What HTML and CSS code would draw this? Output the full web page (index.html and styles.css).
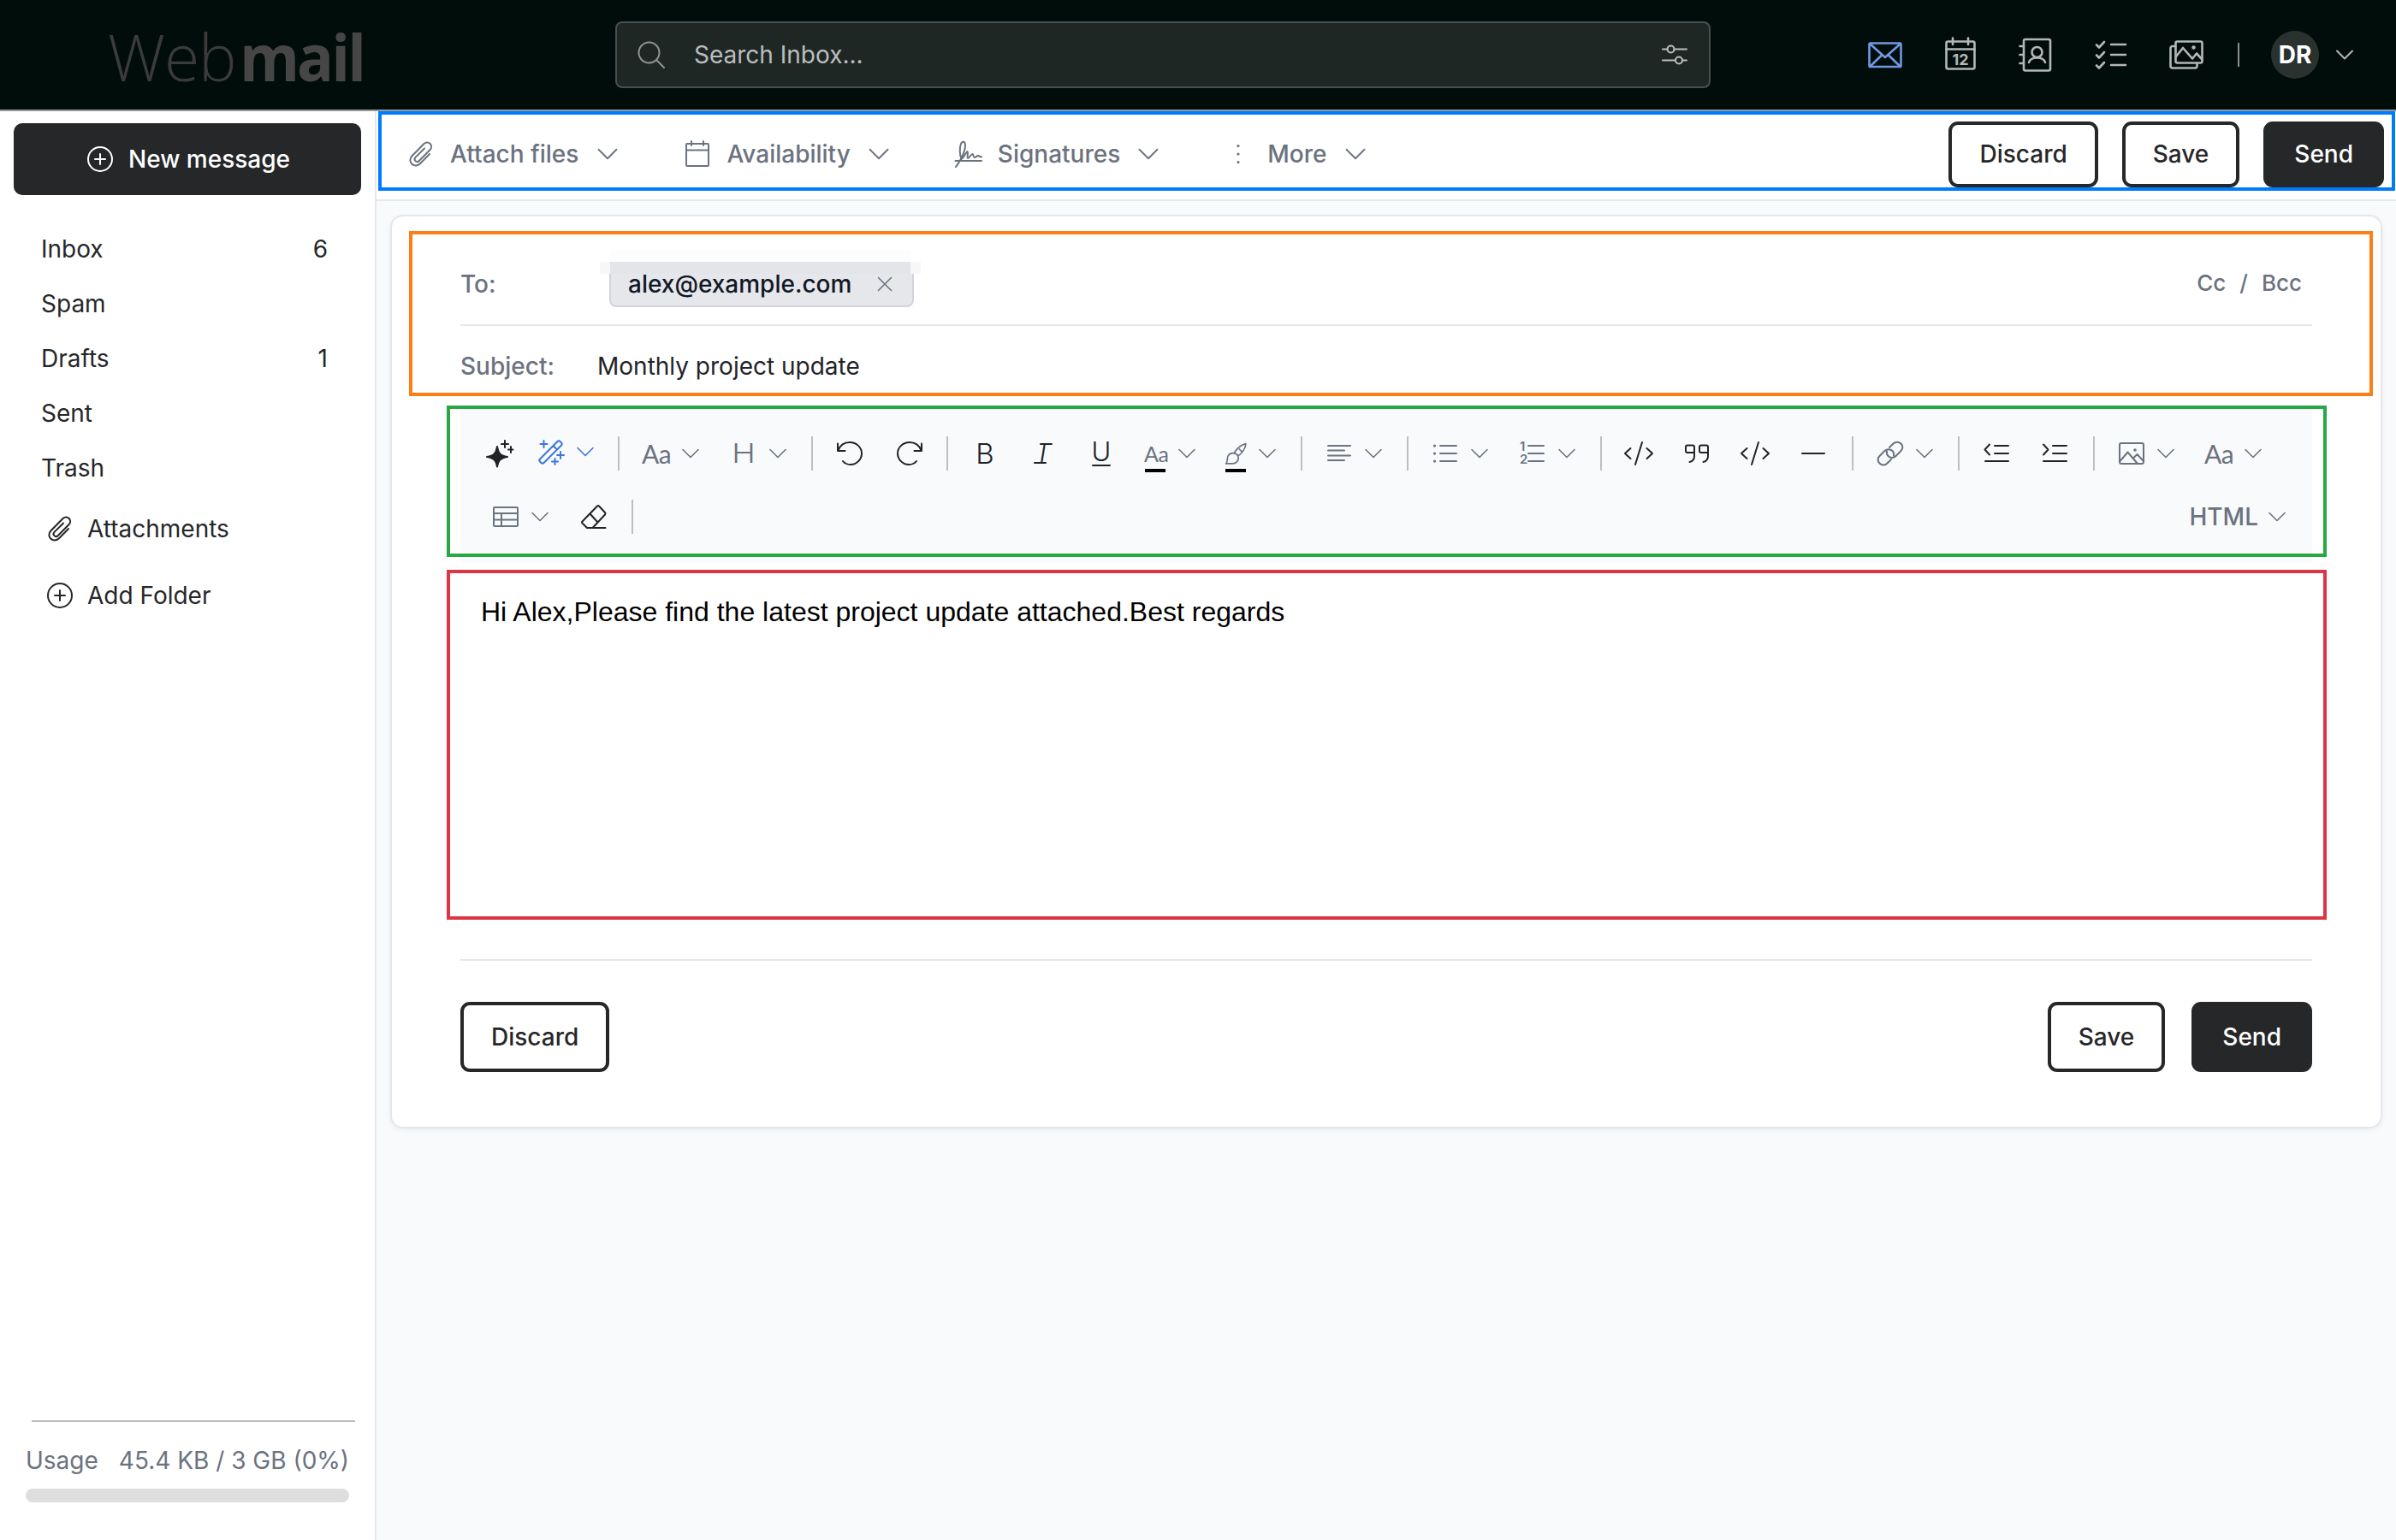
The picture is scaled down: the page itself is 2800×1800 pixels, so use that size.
FILE: index.html
```html
<!DOCTYPE html>
<html lang="en">
<head>
    <meta charset="UTF-8">
    <meta name="viewport" content="width=device-width, initial-scale=1.0">
    <title>Webmail</title>
    <link rel="stylesheet" href="styles.css">
</head>
<body>
    <!-- shared icons -->
    <svg class="defs" width="0" height="0">
        <symbol id="chevron" viewBox="0 0 20 12"><path d="M1 1.5 L10 10.5 L19 1.5"/></symbol>
        <symbol id="clip" viewBox="0 0 32 32"><path d="M26 16 L15 27.3 C12.300 30 8 30.200 5.400 27.800 C2.700 25.200 2.700 21.200 5.300 18.500 L19.500 4 C21.500 2 24.800 2 26.700 4 C28.600 6 28.500 9 26.600 11 L13.800 24 C12.500 25.300 10.600 25.300 9.400 24.100 C8.200 22.900 8.300 21.200 9.500 19.900 L20 9.500"/></symbol>
        <symbol id="plus" viewBox="0 0 32 32"><circle cx="16" cy="16" r="14"/><path d="M16 10 V22 M10 16 H22"/></symbol>
        <symbol id="code" viewBox="0 0 36 32"><path d="M8.500 10 L2 16 L8.500 22 M27.500 10 L34 16 L27.500 22 M22 3 L14 29"/></symbol>
    </svg>

    <header class="header">
        <div class="logo"><span class="logo-thin">Web</span><span class="logo-bold">mail</span></div>
        <div class="search">
            <svg class="icon search-icon" viewBox="0 0 32 32"><circle cx="13.500" cy="13.500" r="12"/><path d="M22.300 22.300 L31 31"/></svg>
            <span class="search-text">Search Inbox...</span>
            <svg class="icon filter-icon" viewBox="0 0 30 26"><circle cx="10.500" cy="6.500" r="4"/><circle cx="20" cy="19.500" r="4"/><path d="M1 6.500 H6.500 M14.500 6.500 H29 M1 19.500 H16 M24 19.500 H29"/></svg>
        </div>
        <nav class="apps">
            <svg class="icon app active" viewBox="0 0 40 40"><rect x="1.500" y="6.500" width="37" height="27.500" rx="1.500"/><path d="M2 7 L16.500 20 M38 7 L20 23 L16.500 20 L2 34 M23.500 20 L38 34"/></svg>
            <svg class="icon app" viewBox="0 0 40 40"><rect x="3.500" y="4.500" width="33" height="32" rx="2"/><path d="M3.500 13.500 H36.500 M11 0.500 V8 M29 0.500 V8"/><text class="day" x="20" y="32" text-anchor="middle">12</text></svg>
            <svg class="icon app" viewBox="0 0 40 40"><rect x="6" y="2" width="31" height="36.500" rx="2"/><path d="M1.500 10 H5.500 M1.500 20 H5.500 M1.500 30 H5.500"/><circle cx="21.500" cy="17" r="6"/><path d="M12 29 C13.500 21.500 29.500 21.500 31 29"/></svg>
            <svg class="icon app" viewBox="0 0 40 40"><path d="M3 8.500 L6 11.500 L12 5 M3 20.500 L6 23.500 L12 17 M3 32.500 L6 35.500 L12 29 M20 8 H37 M20 20 H37 M20 32 H37"/></svg>
            <svg class="icon app" viewBox="0 0 40 40"><rect x="7.500" y="4.500" width="31" height="25" rx="2"/><path d="M7 10 H4 Q1.500 10 1.500 12.500 V33 Q1.500 35.500 4 35.500 H30 Q32.500 35.500 32.500 33 V30"/><path d="M8 22 L16 12 L27 24.500 L32 18.500 L38 25"/><circle class="solid" cx="28.500" cy="11.500" r="1"/></svg>
            <span class="apps-divider"></span>
            <span class="avatar">DR</span>
            <svg class="icon apps-chevron"><use href="#chevron"/></svg>
        </nav>
    </header>

    <div class="page">
        <aside class="sidebar">
            <button class="new-message"><svg class="icon"><use href="#plus"/></svg>New message</button>
            <ul class="folders">
                <li>Inbox <span>6</span></li>
                <li>Spam</li>
                <li>Drafts <span>1</span></li>
                <li>Sent</li>
                <li>Trash</li>
            </ul>
            <div class="side-link"><svg class="icon"><use href="#clip"/></svg>Attachments</div>
            <div class="side-link"><svg class="icon"><use href="#plus"/></svg>Add Folder</div>
            <div class="usage">
                <div class="usage-text"><span>Usage</span><span>45.4 KB / 3 GB (0%)</span></div>
                <div class="usage-bar"></div>
            </div>
        </aside>

        <main class="main">
            <div class="actions">
                <div class="action"><svg class="icon"><use href="#clip"/></svg><span>Attach files</span><svg class="icon chev"><use href="#chevron"/></svg></div>
                <div class="action"><svg class="icon" viewBox="0 0 32 32"><rect x="3" y="4" width="26" height="26" rx="1"/><path d="M3 11.500 H29 M9 1 V6 M23 1 V6"/></svg><span>Availability</span><svg class="icon chev"><use href="#chevron"/></svg></div>
                <div class="action"><svg class="icon" viewBox="0 0 32 32"><path d="M1 31 C6 25 12 13 12 6 C12 1 8.500 0.500 7 4 C5 9 5.500 17 7.500 22 C10 21 12 15 14.500 13 C16 15 13.500 20 15 21 C17 21 18.500 16 20.500 16 C22 17 21 20 23 20 C25 20 25 18 27 18 L31 19.500 M0.500 24 H31"/></svg><span>Signatures</span><svg class="icon chev"><use href="#chevron"/></svg></div>
                <div class="action"><svg class="icon" viewBox="0 0 32 32"><path class="dots" d="M16 6.500 V6.600 M16 16 V16.100 M16 25.500 V25.600"/></svg><span>More</span><svg class="icon chev"><use href="#chevron"/></svg></div>
                <div class="buttons">
                    <button class="btn">Discard</button>
                    <button class="btn">Save</button>
                    <button class="btn btn-dark">Send</button>
                </div>
                <div class="mark mark-blue"></div>
            </div>

            <section class="card">
                <div class="fields">
                    <div class="field field-to">
                        <label>To:</label>
                        <div class="chip">
                            <span>alex@example.com</span>
                            <svg class="icon" viewBox="0 0 18 18"><path d="M1.500 1.500 L16.500 16.500 M16.500 1.500 L1.500 16.500"/></svg>
                            <i class="chip-haze"></i><i class="chip-edge"></i><i class="chip-top"></i>
                        </div>
                        <div class="cc"><span>Cc</span><span>/</span><span>Bcc</span></div>
                    </div>
                    <div class="field field-subject">
                        <label>Subject:</label>
                        <span class="subject">Monthly project update</span>
                    </div>
                    <div class="mark mark-orange"></div>
                </div>

                <div class="tools">
                    <div class="tools-row">
                        <span class="tool dark"><svg class="icon" viewBox="0 0 32 32"><path class="solid" d="M13 8 C14.500 16.500 17 18.500 25 20 C17 21.500 14.500 23.500 13 31.500 C11.500 23.500 9 21.500 1 20 C9 18.500 11.500 16.500 13 8 Z"/><path d="M22 1 V9 M18 5 H26 M29 8 V15 M26 11.500 H31.500"/></svg></span>
                        <span class="tool tool-ai"><svg class="icon" viewBox="0 0 32 32"><path d="M3 24.500 L23.500 4 Q25 2.500 26.500 4 L28 5.500 Q29.500 7 28 8.500 L7.500 29 Q6 30.500 4.500 29 L3 27.500 Q1.500 26 3 24.500 Z M18.500 9 L23 13.500 M7.500 3 V11 M3.500 7 H11.500 M27 16 V24 M23 20 H31 M20.500 24 V31 M17 27.500 H24"/></svg><svg class="icon chev"><use href="#chevron"/></svg></span>
                        <i class="sep"></i>
                        <span class="tool"><span class="aa">Aa</span><svg class="icon chev"><use href="#chevron"/></svg></span>
                        <span class="tool"><span class="letter letter-h">H</span><svg class="icon chev"><use href="#chevron"/></svg></span>
                        <i class="sep"></i>
                        <span class="tool dark"><svg class="icon" viewBox="0 0 32 32"><path d="M2 4.500 V13 H10.500 M2.500 12.500 C5 6 10.500 3 16 3 C24 3 30 9 30 16 C30 23 24 29 17 29 C13 29 10 27.500 8 25"/></svg></span>
                        <span class="tool dark tool-redo"><svg class="icon" viewBox="0 0 32 32"><path d="M30 4.500 V13 H21.500 M29.500 12.500 C27 6 21.500 3 16 3 C8 3 2 9 2 16 C2 23 8 29 15 29 C19 29 22 27.500 24 25"/></svg></span>
                        <i class="sep"></i>
                        <span class="tool dark"><span class="letter letter-b">B</span></span>
                        <span class="tool dark"><svg class="icon letter-i" viewBox="0 0 32 32"><text x="11.500" y="27">I</text><path d="M13 5 H26 M6 27 H19"/></svg></span>
                        <span class="tool dark"><svg class="icon letter-u" viewBox="0 0 32 32"><text x="16" y="25" text-anchor="middle">U</text><path d="M6 30 H26"/></svg></span>
                        <span class="tool tool-color"><span class="aa">Aa</span><svg class="icon chev"><use href="#chevron"/></svg></span>
                        <span class="tool tool-color"><svg class="icon brush" viewBox="0 0 32 32"><path d="M2 29.500 C5 27 3 22 5 18.500 C8 13.500 16 14 18.500 18.500 C21 24 16.500 29.500 11 29.500 Z M13.500 14.500 C17 9 23 3.500 29.500 2 C29 9 23.500 16 18.500 19 M20.500 9.500 L24 13"/></svg><svg class="icon chev"><use href="#chevron"/></svg></span>
                        <i class="sep"></i>
                        <span class="tool"><svg class="icon" viewBox="0 0 32 32"><path d="M3 7 H29 M3 12.500 H22 M3 18.500 H29 M3 24 H22"/></svg><svg class="icon chev"><use href="#chevron"/></svg></span>
                        <i class="sep"></i>
                        <span class="tool"><svg class="icon" viewBox="0 0 32 32"><path d="M10 7 H29 M10 16 H29 M10 25 H29"/><path class="dots" d="M3.500 7 V7.100 M3.500 16 V16.100 M3.500 25 V25.100"/></svg><svg class="icon chev"><use href="#chevron"/></svg></span>
                        <span class="tool"><svg class="icon" viewBox="0 0 32 32"><path d="M11 7 H29 M11 16 H29 M11 25 H29"/><text class="num" x="1" y="12.500">1</text><text class="num" x="1" y="28">2</text></svg><svg class="icon chev"><use href="#chevron"/></svg></span>
                        <i class="sep"></i>
                        <span class="tool dark"><svg class="icon wide"><use href="#code"/></svg></span>
                        <span class="tool dark"><svg class="icon" viewBox="0 0 32 32"><path d="M13 15 H5 Q3 15 3 13 V8.500 Q3 6.500 5 6.500 H11 Q13 6.500 13 8.500 V19 Q13 25 7.500 26 M29 15 H21 Q19 15 19 13 V8.500 Q19 6.500 21 6.500 H27 Q29 6.500 29 8.500 V19 Q29 25 23.500 26"/></svg></span>
                        <span class="tool dark"><svg class="icon wide"><use href="#code"/></svg></span>
                        <span class="tool dark"><svg class="icon" viewBox="0 0 32 32"><path d="M3 16 H29"/></svg></span>
                        <i class="sep"></i>
                        <span class="tool"><svg class="icon" viewBox="0 0 32 32"><path d="M15 9 L19.500 4.500 C22 2 26 2 28.500 4.500 C31 7 31 10.500 28.500 13 L22.500 19 C20 21.500 16 21.500 13.500 19 C12 17.500 11.500 15.500 12 13.500 M17 23 L12.500 27.500 C10 30 6 30 3.500 27.500 C1 25 1 21.500 3.500 19 L9.500 13 C12 10.500 16 10.500 18.500 13 C20 14.500 20.500 16.500 20 18.500"/></svg><svg class="icon chev"><use href="#chevron"/></svg></span>
                        <i class="sep"></i>
                        <span class="tool dark"><svg class="icon" viewBox="0 0 32 32"><path d="M8 5.500 L2.500 11.500 L8 17.500 M14 7 H30 M14 16 H30 M3 25 H30"/></svg></span>
                        <span class="tool dark"><svg class="icon" viewBox="0 0 32 32"><path d="M3 5.500 L8.500 11.500 L3 17.500 M14 7 H30 M14 16 H30 M3 25 H30"/></svg></span>
                        <i class="sep"></i>
                        <span class="tool"><svg class="icon" viewBox="0 0 32 32"><rect x="2" y="4" width="28" height="24" rx="2"/><path d="M2.500 25 L11.500 14.500 L23 28 M18 21.500 L22.500 17 L30 25"/><circle class="solid" cx="20" cy="12" r="0.800"/></svg><svg class="icon chev"><use href="#chevron"/></svg></span>
                        <span class="tool"><span class="aa">Aa</span><svg class="icon chev"><use href="#chevron"/></svg></span>
                    </div>
                    <div class="tools-row">
                        <span class="tool tool-table"><svg class="icon" viewBox="0 0 32 32"><rect x="2" y="5" width="28" height="22" rx="1"/><path d="M2 12 H30 M2 19.500 H30 M11 12 V27"/></svg><svg class="icon chev"><use href="#chevron"/></svg></span>
                        <span class="tool dark tool-eraser"><svg class="icon" viewBox="0 0 32 32"><path d="M2.500 21.500 L20 3.500 Q21 2.500 22 3.500 L29 11 Q30 12 29 13.500 L14.500 29 H8 L2.500 23.500 Q1.500 22.500 2.500 21.500 Z M11.500 12.500 L20.500 22.500 M13 29 H29.500"/></svg></span>
                        <i class="sep"></i>
                        <span class="mode">HTML <svg class="icon chev"><use href="#chevron"/></svg></span>
                    </div>
                    <div class="mark mark-green"></div>
                </div>

                <div class="editor">
                    <p>Hi Alex,Please find the latest project update attached.Best regards</p>
                    <div class="mark mark-red"></div>
                </div>

                <div class="card-footer">
                    <button class="btn">Discard</button>
                    <div class="buttons">
                        <button class="btn">Save</button>
                        <button class="btn btn-dark">Send</button>
                    </div>
                </div>
            </section>
        </main>
    </div>
</body>
</html>
```

FILE: styles.css
```css
* {
    box-sizing: border-box;
}
body {
    margin: 0;
    height: 1800px;
    display: flex;
    flex-direction: column;
    font-family: Inter, sans-serif;
    font-size: 28px;
    color: #262729;
    background-color: #fff;
    overflow: hidden;
}
button {
    font-family: inherit;
    font-size: inherit;
}
.defs {
    position: absolute;
}
.icon {
    width: 32px;
    height: 32px;
    flex: none;
    fill: none;
    stroke: currentColor;
    stroke-width: 2;
    stroke-linecap: round;
    stroke-linejoin: round;
    overflow: visible;
}
.icon text {
    fill: currentColor;
    stroke: none;
}
.icon .solid {
    fill: currentColor;
}
.icon .dots {
    stroke-width: 3.2;
}

/* header */
.header {
    display: flex;
    align-items: center;
    height: 130px;
    flex: none;
    background-color: #010d0a;
    border-bottom: 2px solid #949896;
}
.logo {
    width: 719px;
    padding-left: 126px;
    margin-top: 4px;
    font-family: "Open Sans", sans-serif;
    font-size: 75px;
    line-height: 100px;
    color: #474646;
    white-space: nowrap;
}
.logo-thin {
    font-weight: 300;
    color: #3a3b3a;
    letter-spacing: -1px;
}
.logo-bold {
    display: inline-block;
    margin-left: 4px;
    font-weight: 700;
    letter-spacing: -3px;
    transform: scaleX(0.95);
    transform-origin: left;
}
.search {
    display: flex;
    align-items: center;
    width: 1280px;
    height: 78px;
    padding: 0 25px 0 24px;
    border: 2px solid #47504e;
    border-radius: 8px;
    background-color: #1f2725;
    color: #bbbebd;
}
.search-icon {
    color: #8f9492;
}
.search-text {
    flex: 1;
    margin-left: 34px;
}
.filter-icon {
    width: 30px;
    height: 26px;
}
.apps {
    display: flex;
    align-items: center;
    margin-left: 184px;
    color: #b3b7b6;
}
.app {
    width: 40px;
    height: 40px;
    margin-right: 48px;
    stroke-width: 2.6;
}
.app.active {
    color: #7099e3;
}
.day {
    font-size: 18px;
    font-weight: 700;
}
.apps-divider {
    width: 2px;
    height: 28px;
    margin-left: -8px;
    background-color: #8b908f;
}
.avatar {
    width: 56px;
    height: 56px;
    margin: 0 20px 0 37px;
    border-radius: 50%;
    background-color: #2a3230;
    color: #fff;
    font-weight: 700;
    line-height: 56px;
    text-align: center;
}
.apps-chevron {
    width: 20px;
    height: 12px;
}

/* sidebar */
.page {
    display: flex;
    flex: 1;
}
.sidebar {
    display: flex;
    flex-direction: column;
    width: 440px;
    padding: 14px 16px 44px;
    border-right: 2px solid #e5e7eb;
}
.new-message {
    display: flex;
    align-items: center;
    justify-content: center;
    gap: 17px;
    height: 84px;
    padding: 0 0 0 2px;
    border: none;
    border-radius: 10px;
    background-color: #262729;
    color: #fff;
    font-weight: 500;
}
.folders {
    margin: 31px 0 0;
    padding: 0 39px 0 32px;
    list-style: none;
}
.folders li {
    display: flex;
    justify-content: space-between;
    line-height: 64px;
}
.side-link {
    display: flex;
    align-items: center;
    gap: 16px;
    height: 78px;
    padding-left: 38px;
}
.usage {
    margin: auto 0 0 14px;
    width: 378px;
    color: #6b7280;
}
.usage::before {
    content: "";
    display: block;
    height: 2px;
    margin: 0 -7px 0 7px;
    background-color: #bfbfbf;
}
.usage-text {
    display: flex;
    justify-content: space-between;
    height: 78px;
    padding-top: 12px;
    line-height: 66px;
}
.usage-bar {
    height: 16px;
    border-radius: 8px;
    background-color: #dedede;
}

/* compose */
.main {
    flex: 1;
    background-color: #f9fafc;
}
.actions {
    position: relative;
    display: flex;
    gap: 77px;
    height: 105px;
    padding: 12px 14px 0 36px;
    border-bottom: 2px solid #e5e7eb;
    background-color: #fff;
    color: #6b7280;
    font-weight: 500;
}
.action {
    display: flex;
    align-items: center;
    height: 76px;
}
.action span {
    margin: 0 21px 0 18px;
}
.action:first-child span {
    margin: 0 22px 0 18px;
}
.action .chev {
    width: 24px;
    height: 14px;
    stroke-width: 1.6;
}
.buttons {
    display: flex;
    gap: 28px;
    margin-left: auto;
}
.btn {
    height: 82px;
    padding: 0 32px;
    border: 4px solid #262729;
    border-radius: 11px;
    background-color: #fff;
    color: #262729;
    font-weight: 500;
}
.btn-dark {
    background-color: #262729;
    color: #fff;
}
.actions .btn {
    height: 77px;
    padding-bottom: 1px;
}
.card {
    width: 2328px;
    margin: 16px 0 0 16px;
    padding: 0 80px 64px;
    border: 2px solid #e5e7eb;
    border-radius: 15px;
    background-color: #fff;
    box-shadow: 0 2px 6px rgba(0, 0, 0, 0.06);
}
.fields, .tools, .editor {
    position: relative;
}
.field {
    display: flex;
    align-items: center;
}
.field label {
    color: #6b7280;
    font-weight: 500;
}
.field-to {
    height: 128px;
    padding-top: 32px;
    border-bottom: 2px solid #e5e7eb;
}
.field-to label {
    width: 174px;
}
.field-subject {
    height: 94px;
    margin-bottom: 2px;
}
.field-subject label {
    width: 160px;
}
.subject {
    color: #212529;
}
.chip {
    position: relative;
    display: flex;
    align-items: center;
    justify-content: space-between;
    width: 356px;
    height: 53px;
    padding: 0 23px 0 20px;
    border: 2px solid #d1d5db;
    border-radius: 8px;
    background-color: #e5e7eb;
    color: #111827;
    font-weight: 500;
}
.chip .icon {
    width: 18px;
    height: 18px;
    color: #6b7280;
    stroke-width: 1.6;
}
.chip-haze, .chip-edge, .chip-top {
    position: absolute;
    height: 14px;
}
.chip-haze {
    top: -16px;
    left: -1px;
    width: 351px;
    background-color: #fdfdfd;
}
.chip-edge {
    top: -2px;
    left: -13px;
    width: 12px;
    background-color: #f7f7f8;
    box-shadow: 363px 0 0 #f7f7f8;
}
.chip-top {
    top: -2px;
    left: -1px;
    width: 351px;
    background-color: #e4e5ea;
}
.cc {
    display: flex;
    gap: 16px;
    margin: -3px 12px 0 auto;
    color: #6b7280;
    font-size: 26px;
    font-weight: 500;
}

/* formatting toolbar */
.tools {
    padding: 16px 12px;
    background-color: #f9fafc;
    color: #6b7280;
}
.tools-row {
    display: flex;
    align-items: center;
    height: 74px;
}
.tool {
    position: relative;
    display: flex;
    flex: none;
    align-items: center;
    gap: 14px;
    padding: 0 18px;
}
.dark {
    color: #212327;
}
.chev {
    width: 20px;
    height: 12px;
    stroke-width: 1.6;
}
.sep {
    flex: none;
    width: 2px;
    height: 40px;
    margin: 0 9px 0 11px;
    background-color: #bfbfbf;
}
.wide {
    width: 36px;
    margin: 0 -2px;
}
.aa {
    width: 33px;
    margin-left: -1px;
    font-family: Lato, sans-serif;
    font-size: 30px;
    line-height: 32px;
    letter-spacing: -0.5px;
}
.letter {
    width: 32px;
    font-size: 31px;
    font-weight: 300;
    line-height: 32px;
    text-align: center;
}
.letter-h {
    transform: scaleX(1.2);
}
.letter-b {
    font-size: 33px;
}
.letter-i text, .letter-u text {
    font-size: 31px;
    font-weight: 300;
}
.letter-i text {
    font-style: italic;
}
.num {
    font-size: 15px;
    font-weight: 600;
}
.tool-ai {
    padding-left: 10px;
    padding-right: 17px;
    padding-bottom: 5px;
    color: #3b76dc;
}
.tool-redo {
    margin: 0 -2px 0 2px;
}
.tool-color {
    gap: 13px;
    height: 32px;
    padding-left: 16px;
}
.tool-color .brush {
    width: 27px;
    height: 27px;
}
.tool-color .aa {
    width: 27px;
    margin-left: 0;
    font-size: 25px;
}
/* current colour swatch under the icon */
.tool-color::after {
    content: "";
    position: absolute;
    left: 17px;
    bottom: -6px;
    width: 24px;
    height: 4px;
    background-color: #000;
}
.tool-table {
    padding-left: 25px;
}
.tool-eraser {
    margin-left: 1px;
    padding-right: 17px;
}
.mode {
    display: flex;
    align-items: center;
    gap: 12px;
    margin: 0 19px 0 auto;
    font-weight: 500;
}

.editor {
    height: 466px;
    padding: 39px 24px 0;
    border-bottom: 2px solid #e5e7eb;
}
.editor p {
    margin: 0;
    font-family: "Liberation Sans", Arial, sans-serif;
    font-size: 32px;
    line-height: 38px;
    color: #000;
}
.card-footer {
    display: flex;
    padding-top: 48px;
}
.card-footer .buttons {
    gap: 31px;
}

/* section outlines */
.mark {
    position: absolute;
    border: 4px solid;
    pointer-events: none;
}
.mark-blue {
    inset: 0 1px 10px 2px;
    border-color: #007bff;
}
.mark-orange {
    inset: 17px -71px 12px -60px;
    border-color: #fd7e14;
}
.mark-green {
    inset: -3px -17px 6px -16px;
    border-color: #28a745;
}
.mark-red {
    inset: 9px -17px 46px -16px;
    border-color: #dc3545;
}
```
